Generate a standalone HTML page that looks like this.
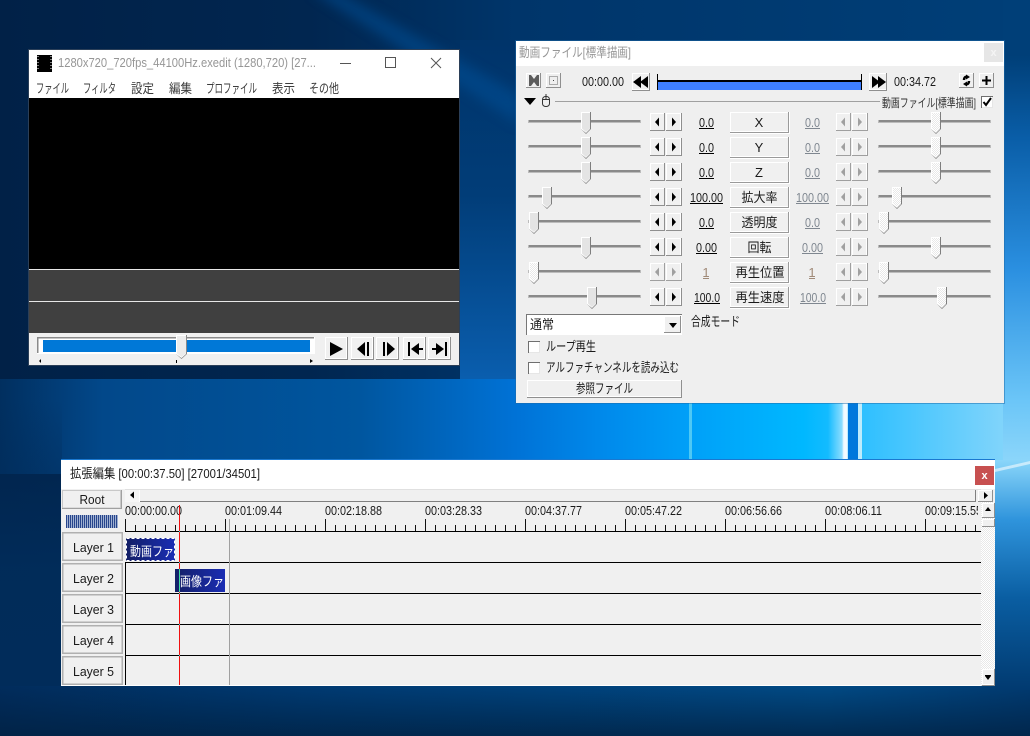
<!DOCTYPE html>
<html lang="ja"><head><meta charset="utf-8"><title>AviUtl</title>
<style>
html,body{margin:0;padding:0;background:#012a58;width:1030px;height:736px;overflow:hidden}
svg{display:block}
text{font-family:"Liberation Sans","Noto Sans CJK JP",sans-serif;font-size:13px;fill:#1a1a1a}
.g{fill:#7f8790}.t{fill:#969696}.m{fill:#3c3c3c}
.mid{text-anchor:middle}
</style></head><body>
<svg xmlns="http://www.w3.org/2000/svg" width="1030" height="736" viewBox="0 0 1030 736">
<defs>
<linearGradient id="top" x1="0" x2="1" y1="0" y2="0"><stop offset="0" stop-color="#012147"/><stop offset=".3" stop-color="#012650"/><stop offset=".5" stop-color="#00356a"/><stop offset="1" stop-color="#003f78"/></linearGradient>
<linearGradient id="band" x1="0" x2="1" y1="0" y2="0"><stop offset="0" stop-color="#012f5f"/><stop offset=".1" stop-color="#02488a"/><stop offset=".35" stop-color="#00569f"/><stop offset=".5" stop-color="#0072d6"/><stop offset=".58" stop-color="#0088ea"/><stop offset=".67" stop-color="#00a0f8"/><stop offset=".78" stop-color="#00b8ff"/><stop offset=".84" stop-color="#30c0ff"/><stop offset="1" stop-color="#90d8fa"/></linearGradient>
<linearGradient id="bot" x1="0" x2="1" y1="0" y2="0"><stop offset="0" stop-color="#012c5c"/><stop offset=".3" stop-color="#003a72"/><stop offset=".8" stop-color="#014a85"/><stop offset="1" stop-color="#013a70"/></linearGradient>
<linearGradient id="botv" x1="0" x2="0" y1="0" y2="1"><stop offset="0" stop-color="#012040" stop-opacity="0"/><stop offset="1" stop-color="#012040" stop-opacity=".75"/></linearGradient>
<linearGradient id="lft" x1="0" x2="0" y1="0" y2="1"><stop offset="0" stop-color="#012c5a" stop-opacity="0"/><stop offset=".5" stop-color="#012c5a" stop-opacity=".95"/><stop offset="1" stop-color="#012c5a"/></linearGradient>
<linearGradient id="rt" x1="0" x2="0" y1="0" y2="1"><stop offset="0" stop-color="#003f78"/><stop offset=".12" stop-color="#003f78"/><stop offset=".3" stop-color="#0a5ea8"/><stop offset=".58" stop-color="#2a8fe0"/><stop offset=".87" stop-color="#6cc6f8"/><stop offset="1" stop-color="#8cd6fa"/></linearGradient>
<linearGradient id="rb" x1="0" x2="0" y1="0" y2="1"><stop offset="0" stop-color="#8ad6fa"/><stop offset=".26" stop-color="#2f94dc"/><stop offset=".6" stop-color="#0a5ea2"/><stop offset="1" stop-color="#013a70"/></linearGradient>
<linearGradient id="gap" x1="0" x2="0" y1="0" y2="1"><stop offset="0" stop-color="#00346a"/><stop offset=".45" stop-color="#013d78"/><stop offset="1" stop-color="#0a5fb0"/></linearGradient>
<linearGradient id="glow" x1="0" x2="1" y1="0" y2="0"><stop offset="0" stop-color="#fff" stop-opacity="0"/><stop offset="1" stop-color="#fff" stop-opacity=".55"/></linearGradient>
<linearGradient id="clip1" x1="0" x2="1" y1="0" y2="0"><stop offset="0" stop-color="#141f66"/><stop offset="1" stop-color="#1a2db4"/></linearGradient>
<filter id="b8" x="-30%" y="-30%" width="160%" height="160%"><feGaussianBlur stdDeviation="6"/></filter>
<filter id="b1" x="-50%" y="-10%" width="200%" height="120%"><feGaussianBlur stdDeviation="0.8"/></filter>
<pattern id="dith" width="2" height="2" patternUnits="userSpaceOnUse"><rect width="2" height="2" fill="#fff"/><rect width="1" height="1" fill="#e8e8e8"/><rect x="1" y="1" width="1" height="1" fill="#e8e8e8"/></pattern>
<pattern id="tickm" x="125" width="10" height="6" patternUnits="userSpaceOnUse"><rect x="0" width="1" height="6" fill="#111"/></pattern>
<pattern id="tickM" x="125" width="100" height="12" patternUnits="userSpaceOnUse"><rect x="0" width="1" height="12" fill="#111"/></pattern>
<pattern id="wave" x="66" width="2" height="10" patternUnits="userSpaceOnUse"><rect width="1" height="10" fill="#27458c"/><rect x="1" width="1" height="10" fill="#9fb0d0"/></pattern>
<clipPath id="rul"><rect x="125" y="500" width="853" height="20"/></clipPath>
<clipPath id="c1"><rect x="126" y="538" width="49" height="23"/></clipPath>
<clipPath id="c2"><rect x="175" y="569" width="50" height="23"/></clipPath>

<g id="spin">
 <rect width="15" height="18" fill="#8f8f8f"/><rect width="14" height="17" fill="#fff"/><rect x="1" y="1" width="13" height="16" fill="#f0f0f0"/>
 <rect x="16" width="16" height="18" fill="#8f8f8f"/><rect x="16" width="15" height="17" fill="#fff"/><rect x="17" y="1" width="13" height="16" fill="#f0f0f0"/>
 <polygon points="5,9 9,4.500 9,13.500" fill="#000"/><polygon points="22,4.500 26,9 22,13.500" fill="#000"/>
</g>
<g id="spinD">
 <rect width="15" height="18" fill="#9f9f9f"/><rect width="14" height="17" fill="#fff"/><rect x="1" y="1" width="13" height="16" fill="#f0f0f0"/>
 <rect x="16" width="16" height="18" fill="#9f9f9f"/><rect x="16" width="15" height="17" fill="#fff"/><rect x="17" y="1" width="13" height="16" fill="#f0f0f0"/>
 <polygon points="5,9 9,4.500 9,13.500" fill="#a0a0a0"/><polygon points="22,4.500 26,9 22,13.500" fill="#a0a0a0"/>
</g>
<g id="thumb">
 <polygon points="0,0 10,0 10,17 5,22 0,17" fill="#7e7e7e"/>
 <polygon points="0,0 9,0 9,17 5,21 0,17" fill="#fff"/>
 <polygon points="1,1 9,1 9,16.500 5,20 1,16.500" fill="#e4e4e4"/>
</g>
<g id="thumbD">
 <polygon points="0,0 10,0 10,17 5,22 0,17" fill="#7e7e7e"/>
 <polygon points="0,0 9,0 9,17 5,21 0,17" fill="#fff"/>
 <polygon points="1,1 9,1 9,16.500 5,20 1,16.500" fill="url(#dith)"/>
</g>
<g id="track">
 <rect width="113" height="3" fill="#bcbcbc"/><rect x="1" y="0" width="111" height="2" fill="#8a8a8a"/>
</g>
<g id="nbtn">
 <rect width="59" height="21" fill="#9a9a9a"/><rect width="58" height="20" fill="#fff"/><rect x="1" y="1" width="57" height="18" fill="#f0f0f0"/>
 <rect x="59" y="0" width="1" height="22" fill="#fff"/><rect y="21" width="60" height="1" fill="#fff"/>
</g>
<g id="pbtn">
 <rect width="23" height="23" fill="#8f8f8f"/><rect width="22" height="22" fill="#fff"/><rect x="1" y="1" width="20" height="20" fill="#f0f0f0"/>
</g>
<g id="layer">
 <rect width="61" height="29" fill="#b0b0b0"/><rect x="1.500" y="1.500" width="58" height="26" fill="#f0f0f0"/>
</g>
<g id="cb"><rect width="12" height="12" fill="#6f6f6f"/><rect x="1" y="1" width="11" height="11" fill="#e6e6e6"/><rect x="1" y="1" width="10" height="10" fill="#fff"/></g>
</defs>

<!-- wallpaper -->
<rect width="1030" height="736" fill="url(#top)"/>
<rect x="460" y="40" width="60" height="345" fill="url(#gap)"/>
<polygon points="310,-10 335,-10 520,95 520,125" fill="#005096" opacity=".55" filter="url(#b8)"/>
<rect x="0" y="379" width="1030" height="95" fill="url(#band)"/>
<rect x="1003" y="0" width="27" height="462" fill="url(#rt)"/>
<rect x="0" y="400" width="62" height="336" fill="url(#lft)"/>
<rect x="0" y="686" width="1030" height="50" fill="url(#bot)"/>
<rect x="0" y="686" width="1030" height="50" fill="url(#botv)"/>
<rect x="995" y="460" width="35" height="230" fill="url(#rb)"/>
<polygon points="995,469 1030,461 1030,464 995,472" fill="#fff" opacity=".55"/>
<rect x="689" y="400" width="3" height="62" fill="#62d2f2" opacity=".8"/>
<rect x="828" y="400" width="16" height="62" fill="url(#glow)"/>
<rect x="843" y="400" width="5" height="62" fill="#fff" opacity=".95" filter="url(#b1)"/>
<rect x="848" y="400" width="10" height="62" fill="#0078dc"/>
<rect x="858" y="400" width="4" height="62" fill="#d8f2fc" opacity=".85"/>

<!-- main window -->
<rect x="28" y="49" width="432" height="317" fill="#2b3f58"/>
<rect x="29" y="50" width="430" height="49" fill="#fff"/>
<rect x="37" y="55" width="15" height="17" fill="#000"/>
<path d="M38 56v15M51 56v15" stroke="#fff" stroke-width="1" stroke-dasharray="1 2"/>
<text x="58" y="67" class="t" textLength="258" lengthAdjust="spacingAndGlyphs">1280x720_720fps_44100Hz.exedit (1280,720)  [27...</text>
<rect x="340" y="63" width="11" height="1" fill="#555"/>
<rect x="385.500" y="57.500" width="10" height="10" fill="none" stroke="#555"/>
<path d="M431 58l10 10M441 58l-10 10" stroke="#555" fill="none"/>
<text x="36" y="93" class="m" textLength="33" lengthAdjust="spacingAndGlyphs">ファイル</text>
<text x="83" y="93" class="m" textLength="33" lengthAdjust="spacingAndGlyphs">フィルタ</text>
<text x="131" y="93" class="m" textLength="23" lengthAdjust="spacingAndGlyphs">設定</text>
<text x="169" y="93" class="m" textLength="23" lengthAdjust="spacingAndGlyphs">編集</text>
<text x="206" y="93" class="m" textLength="51" lengthAdjust="spacingAndGlyphs">プロファイル</text>
<text x="272" y="93" class="m" textLength="23" lengthAdjust="spacingAndGlyphs">表示</text>
<text x="309" y="93" class="m" textLength="30" lengthAdjust="spacingAndGlyphs">その他</text>
<rect x="29" y="98" width="430" height="171" fill="#000"/>
<rect x="29" y="269" width="430" height="1" fill="#e8e8e8"/>
<rect x="29" y="270" width="430" height="31" fill="#404040"/>
<rect x="29" y="301" width="430" height="1" fill="#e8e8e8"/>
<rect x="29" y="302" width="430" height="31" fill="#404040"/>
<rect x="29" y="333" width="430" height="32" fill="#f0f0f0"/>
<rect x="37" y="337" width="278" height="17" fill="#fff"/>
<rect x="37" y="337" width="277" height="1.500" fill="#8a8a8a"/>
<rect x="37" y="337" width="1.500" height="16" fill="#8a8a8a"/>
<rect x="43" y="340" width="267" height="12" fill="#0078d7"/>
<g transform="translate(176 335)"><polygon points="0,0 11,0 11,19 5.500,24 0,19" fill="#8a8a8a"/><polygon points="0,0 10,0 10,19 5.500,23 0,19" fill="#fff"/><polygon points="1,1 10,1 10,18.500 5.500,22 1,18.500" fill="#ececec"/></g>
<polygon points="41,359 41,363 39,361" fill="#000"/><rect x="176" y="360" width="1" height="3" fill="#000"/><polygon points="310,359 310,363 313,361" fill="#000"/>
<use href="#pbtn" x="325" y="337"/><polygon points="330,342 343,349 330,356" fill="#000"/>
<use href="#pbtn" x="351" y="337"/><polygon points="365,342 357,349 365,356" fill="#000"/><rect x="367" y="342" width="2" height="14" fill="#000"/>
<use href="#pbtn" x="376" y="337"/><rect x="383" y="342" width="2" height="14" fill="#000"/><polygon points="387,342 395,349 387,356" fill="#000"/>
<use href="#pbtn" x="403" y="337"/><rect x="408" y="342" width="2" height="14" fill="#000"/><polygon points="411,349 419,343 419,355" fill="#000"/><rect x="418" y="348" width="5" height="2" fill="#000"/>
<use href="#pbtn" x="428" y="337"/><rect x="445" y="342" width="2" height="14" fill="#000"/><polygon points="444,349 436,343 436,355" fill="#000"/><rect x="432" y="348" width="5" height="2" fill="#000"/>

<!-- object window -->
<rect x="515" y="40" width="490" height="364" fill="#1e6aa8" opacity=".5"/>
<rect x="516" y="41" width="488" height="362" fill="#efefef"/>
<rect x="516" y="41" width="488" height="25" fill="#fff"/>
<rect x="984" y="43" width="19" height="19" fill="#e6e6e6"/>
<text x="993.500" y="56" class="mid" style="fill:#f4f4f4;font-size:11px;font-weight:bold">x</text>
<text x="519" y="57" class="t" textLength="112" lengthAdjust="spacingAndGlyphs">動画ファイル[標準描画]</text>

<rect x="526" y="73" width="15" height="15" fill="#8f8f8f"/><rect x="526" y="73" width="14" height="14" fill="#fff"/><rect x="527" y="74" width="13" height="13" fill="#efefef"/>
<path d="M529 75h10v11h-10z" fill="#5c5c5c"/><path d="M531 75h6l-3 4zM531 86h6l-3-4z" fill="#efefef"/>
<rect x="546" y="73" width="15" height="15" fill="#8f8f8f"/><rect x="546" y="73" width="14" height="14" fill="#fff"/><rect x="547" y="74" width="13" height="13" fill="#efefef"/>
<rect x="549.500" y="76.500" width="8" height="8" fill="none" stroke="#666" stroke-dasharray="1 1"/><rect x="553" y="80" width="1" height="1" fill="#444"/>
<text x="582" y="86" textLength="42" lengthAdjust="spacingAndGlyphs">00:00.00</text>
<rect x="632" y="73" width="18" height="18" fill="#8f8f8f"/><rect x="632" y="73" width="17" height="17" fill="#fff"/><rect x="633" y="74" width="16" height="15" fill="#f0f0f0"/>
<polygon points="633,82 641,76 641,88" fill="#000"/><polygon points="640,82 648,76 648,88" fill="#000"/>
<rect x="657" y="74" width="1" height="16" fill="#000"/><rect x="861" y="74" width="1" height="16" fill="#000"/>
<rect x="657" y="80" width="205" height="2" fill="#000"/><rect x="658" y="82" width="203" height="8" fill="#3f7fff"/>
<rect x="869" y="73" width="18" height="18" fill="#8f8f8f"/><rect x="869" y="73" width="17" height="17" fill="#fff"/><rect x="870" y="74" width="16" height="15" fill="#f0f0f0"/>
<polygon points="872,76 880,82 872,88" fill="#000"/><polygon points="878,76 886,82 878,88" fill="#000"/>
<text x="894" y="86" textLength="42" lengthAdjust="spacingAndGlyphs">00:34.72</text>
<rect x="959" y="73" width="15" height="15" fill="#8f8f8f"/><rect x="959" y="73" width="14" height="14" fill="#fff"/><rect x="960" y="74" width="13" height="13" fill="#f0f0f0"/>
<path d="M968 77c-3-1-4 1-4 3M965 84c3 1 4-1 4-3" stroke="#000" stroke-width="2.500" fill="none"/><polygon points="966,74.500 970,77 966,79.500" fill="#000"/><polygon points="967,81.500 963,84 967,86.500" fill="#000"/>
<rect x="979" y="73" width="15" height="15" fill="#8f8f8f"/><rect x="979" y="73" width="14" height="14" fill="#fff"/><rect x="980" y="74" width="13" height="13" fill="#f0f0f0"/>
<path d="M986.500 76v9M982 80.500h9" stroke="#000" stroke-width="2" fill="none"/>

<polygon points="524,98 536,98 530,105" fill="#000"/>
<rect x="542.500" y="96.500" width="7" height="10" rx="3" fill="none" stroke="#333"/><path d="M546 94v5M543 99.500h6" stroke="#333" fill="none"/>
<rect x="555" y="101" width="325" height="1" fill="#a0a0a0"/>
<text x="882" y="107" style="font-size:12px;fill:#333" textLength="94" lengthAdjust="spacingAndGlyphs">動画ファイル[標準描画]</text>
<use href="#cb" x="981" y="96"/><path d="M983.500 102l2.500 3 5-7" stroke="#000" stroke-width="2" fill="none"/>

<!-- rows -->
<use href="#track" x="528" y="120"/><use href="#track" x="528" y="145"/><use href="#track" x="528" y="170"/><use href="#track" x="528" y="195"/><use href="#track" x="528" y="220"/><use href="#track" x="528" y="245"/><use href="#track" x="528" y="270"/><use href="#track" x="528" y="295"/>
<use href="#track" x="878" y="120"/><use href="#track" x="878" y="145"/><use href="#track" x="878" y="170"/><use href="#track" x="878" y="195"/><use href="#track" x="878" y="220"/><use href="#track" x="878" y="245"/><use href="#track" x="878" y="270"/><use href="#track" x="878" y="295"/>

<use href="#thumb" x="581" y="112"/><use href="#thumb" x="581" y="137"/><use href="#thumb" x="581" y="162"/><use href="#thumb" x="542" y="187"/><use href="#thumb" x="529" y="212"/><use href="#thumb" x="581" y="237"/><use href="#thumbD" x="529" y="262"/><use href="#thumb" x="587" y="287"/>
<use href="#thumbD" x="931" y="112"/><use href="#thumbD" x="931" y="137"/><use href="#thumbD" x="931" y="162"/><use href="#thumbD" x="892" y="187"/><use href="#thumbD" x="879" y="212"/><use href="#thumbD" x="931" y="237"/><use href="#thumbD" x="879" y="262"/><use href="#thumbD" x="937" y="287"/>

<use href="#spin" x="650" y="113"/><use href="#spin" x="650" y="138"/><use href="#spin" x="650" y="163"/><use href="#spin" x="650" y="188"/><use href="#spin" x="650" y="213"/><use href="#spin" x="650" y="238"/><use href="#spinD" x="650" y="263"/><use href="#spin" x="650" y="288"/>
<use href="#spinD" x="836" y="113"/><use href="#spinD" x="836" y="138"/><use href="#spinD" x="836" y="163"/><use href="#spinD" x="836" y="188"/><use href="#spinD" x="836" y="213"/><use href="#spinD" x="836" y="238"/><use href="#spinD" x="836" y="263"/><use href="#spinD" x="836" y="288"/>

<use href="#nbtn" x="730" y="112"/><use href="#nbtn" x="730" y="137"/><use href="#nbtn" x="730" y="162"/><use href="#nbtn" x="730" y="187"/><use href="#nbtn" x="730" y="212"/><use href="#nbtn" x="730" y="237"/><use href="#nbtn" x="730" y="262"/><use href="#nbtn" x="730" y="287"/>
<text x="759" y="127" class="mid">X</text>
<text x="759" y="152" class="mid">Y</text>
<text x="759" y="177" class="mid">Z</text>
<text x="759.500" y="202" class="mid" textLength="36" lengthAdjust="spacingAndGlyphs">拡大率</text>
<text x="759.500" y="227" class="mid" textLength="36" lengthAdjust="spacingAndGlyphs">透明度</text>
<text x="759.500" y="252" class="mid" textLength="24" lengthAdjust="spacingAndGlyphs">回転</text>
<text x="760" y="277" class="mid" textLength="49" lengthAdjust="spacingAndGlyphs">再生位置</text>
<text x="760" y="302" class="mid" textLength="49" lengthAdjust="spacingAndGlyphs">再生速度</text>

<text x="706.500" y="127" class="mid" textLength="15" lengthAdjust="spacingAndGlyphs">0.0</text><rect x="699" y="128" width="15" height="1" fill="#000"/>
<text x="706.500" y="152" class="mid" textLength="15" lengthAdjust="spacingAndGlyphs">0.0</text><rect x="699" y="153" width="15" height="1" fill="#000"/>
<text x="706.500" y="177" class="mid" textLength="15" lengthAdjust="spacingAndGlyphs">0.0</text><rect x="699" y="178" width="15" height="1" fill="#000"/>
<text x="706.500" y="202" class="mid" textLength="33" lengthAdjust="spacingAndGlyphs">100.00</text><rect x="690" y="203" width="33" height="1" fill="#000"/>
<text x="706.500" y="227" class="mid" textLength="15" lengthAdjust="spacingAndGlyphs">0.0</text><rect x="699" y="228" width="15" height="1" fill="#000"/>
<text x="706.500" y="252" class="mid" textLength="21" lengthAdjust="spacingAndGlyphs">0.00</text><rect x="696" y="253" width="21" height="1" fill="#000"/>
<text x="706" y="277" class="mid" style="fill:#a08a78">1</text><rect x="703" y="278" width="6" height="1" fill="#a08a78"/>
<text x="707" y="302" class="mid" textLength="26" lengthAdjust="spacingAndGlyphs">100.0</text><rect x="694" y="303" width="26" height="1" fill="#000"/>

<text x="812.500" y="127" class="mid g" textLength="15" lengthAdjust="spacingAndGlyphs">0.0</text><rect x="805" y="128" width="15" height="1" fill="#7f8790"/>
<text x="812.500" y="152" class="mid g" textLength="15" lengthAdjust="spacingAndGlyphs">0.0</text><rect x="805" y="153" width="15" height="1" fill="#7f8790"/>
<text x="812.500" y="177" class="mid g" textLength="15" lengthAdjust="spacingAndGlyphs">0.0</text><rect x="805" y="178" width="15" height="1" fill="#7f8790"/>
<text x="812.500" y="202" class="mid g" textLength="33" lengthAdjust="spacingAndGlyphs">100.00</text><rect x="796" y="203" width="33" height="1" fill="#7f8790"/>
<text x="812.500" y="227" class="mid g" textLength="15" lengthAdjust="spacingAndGlyphs">0.0</text><rect x="805" y="228" width="15" height="1" fill="#7f8790"/>
<text x="812.500" y="252" class="mid g" textLength="21" lengthAdjust="spacingAndGlyphs">0.00</text><rect x="802" y="253" width="21" height="1" fill="#7f8790"/>
<text x="812" y="277" class="mid" style="fill:#a08a78">1</text><rect x="809" y="278" width="6" height="1" fill="#a08a78"/>
<text x="813" y="302" class="mid g" textLength="26" lengthAdjust="spacingAndGlyphs">100.0</text><rect x="800" y="303" width="26" height="1" fill="#7f8790"/>

<!-- combo and checks -->
<rect x="526" y="314" width="156" height="21" fill="#fff"/>
<rect x="526" y="314" width="156" height="1" fill="#777"/><rect x="526" y="314" width="1" height="21" fill="#777"/>
<rect x="664" y="316" width="17" height="17" fill="#8f8f8f"/><rect x="664" y="316" width="16" height="16" fill="#fff"/><rect x="665" y="317" width="15" height="15" fill="#f0f0f0"/>
<polygon points="669,323 677,323 673,328" fill="#000"/>
<text x="530" y="329" textLength="24" lengthAdjust="spacingAndGlyphs">通常</text>
<text x="691" y="326" textLength="49" lengthAdjust="spacingAndGlyphs">合成モード</text>
<use href="#cb" x="528" y="341"/>
<text x="546" y="351" textLength="50" lengthAdjust="spacingAndGlyphs">ループ再生</text>
<use href="#cb" x="528" y="362"/>
<text x="546" y="372" textLength="133" lengthAdjust="spacingAndGlyphs">アルファチャンネルを読み込む</text>
<rect x="527" y="380" width="155" height="18" fill="#8f8f8f"/><rect x="527" y="380" width="154" height="17" fill="#fff"/><rect x="528" y="381" width="153" height="15" fill="#f0f0f0"/>
<text x="604.500" y="393" class="mid" textLength="57" lengthAdjust="spacingAndGlyphs">参照ファイル</text>

<!-- timeline window -->
<rect x="61" y="459" width="934" height="1" fill="#1a78d0"/>
<rect x="61" y="460" width="934" height="30" fill="#fff"/>
<rect x="61" y="489" width="934" height="197" fill="#f0f0f0"/>
<rect x="61" y="685" width="921" height="1" fill="#fff"/>
<text x="70" y="478" textLength="190" lengthAdjust="spacingAndGlyphs">拡張編集 [00:00:37.50] [27001/34501]</text>
<rect x="975" y="466" width="19" height="19" fill="#c75050"/>
<text x="984.500" y="479" class="mid" style="fill:#fff;font-size:11px;font-weight:bold">x</text>

<rect x="62" y="490" width="60" height="19" fill="#a0a0a0"/><rect x="62" y="490" width="59" height="18" fill="#c8c8c8"/><rect x="63" y="491" width="57" height="16.500" fill="#f0f0f0"/>
<text x="92" y="504" class="mid" textLength="25" lengthAdjust="spacingAndGlyphs">Root</text>
<rect x="66" y="515" width="52" height="13" fill="url(#wave)"/>

<rect x="125" y="489" width="856" height="1" fill="#e0e0e0"/>
<rect x="125" y="490" width="15" height="12" fill="#f6f6f6"/><polygon points="130,495 134,491.500 134,498.500" fill="#000"/>
<rect x="139" y="490" width="1" height="12" fill="#fff"/>
<rect x="140" y="490" width="836" height="11" fill="#f0f0f0"/>
<rect x="140" y="501" width="836" height="1" fill="#808080"/><rect x="975" y="490" width="1" height="12" fill="#808080"/>
<rect x="978" y="490" width="15" height="12" fill="#8f8f8f"/><rect x="978" y="490" width="14" height="11" fill="#fff"/><rect x="979" y="491" width="13" height="10" fill="#f0f0f0"/>
<polygon points="984,492 984,499 988,495.500" fill="#000"/>

<g clip-path="url(#rul)">
<text x="125" y="515" textLength="57" lengthAdjust="spacingAndGlyphs">00:00:00.00</text>
<text x="225" y="515" textLength="57" lengthAdjust="spacingAndGlyphs">00:01:09.44</text>
<text x="325" y="515" textLength="57" lengthAdjust="spacingAndGlyphs">00:02:18.88</text>
<text x="425" y="515" textLength="57" lengthAdjust="spacingAndGlyphs">00:03:28.33</text>
<text x="525" y="515" textLength="57" lengthAdjust="spacingAndGlyphs">00:04:37.77</text>
<text x="625" y="515" textLength="57" lengthAdjust="spacingAndGlyphs">00:05:47.22</text>
<text x="725" y="515" textLength="57" lengthAdjust="spacingAndGlyphs">00:06:56.66</text>
<text x="825" y="515" textLength="57" lengthAdjust="spacingAndGlyphs">00:08:06.11</text>
<text x="925" y="515" textLength="57" lengthAdjust="spacingAndGlyphs">00:09:15.55</text>
</g>
<rect x="125" y="525" width="856" height="6" fill="url(#tickm)"/>
<rect x="125" y="519" width="856" height="12" fill="url(#tickM)"/>
<rect x="125" y="531" width="856" height="1" fill="#000"/>

<use href="#layer" x="62" y="532"/><use href="#layer" x="62" y="563"/><use href="#layer" x="62" y="594"/><use href="#layer" x="62" y="625"/><use href="#layer" x="62" y="656"/>
<text x="93.500" y="552" class="mid" textLength="41" lengthAdjust="spacingAndGlyphs">Layer  1</text>
<text x="93.500" y="583" class="mid" textLength="41" lengthAdjust="spacingAndGlyphs">Layer  2</text>
<text x="93.500" y="614" class="mid" textLength="41" lengthAdjust="spacingAndGlyphs">Layer  3</text>
<text x="93.500" y="645" class="mid" textLength="41" lengthAdjust="spacingAndGlyphs">Layer  4</text>
<text x="93.500" y="676" class="mid" textLength="41" lengthAdjust="spacingAndGlyphs">Layer  5</text>

<rect x="125" y="562" width="1" height="123" fill="#000"/>
<rect x="125" y="562" width="856" height="1" fill="#000"/>
<rect x="125" y="593" width="856" height="1" fill="#000"/>
<rect x="125" y="624" width="856" height="1" fill="#000"/>
<rect x="125" y="655" width="856" height="1" fill="#000"/>
<rect x="229" y="519" width="1" height="166" fill="#a0a0a0"/>

<rect x="126" y="538" width="49" height="23" fill="url(#clip1)"/>
<rect x="126.500" y="538.500" width="48" height="22" fill="none" stroke="#fff" stroke-dasharray="3 2"/>
<g clip-path="url(#c1)"><text x="130" y="556" style="fill:#fff" textLength="66" lengthAdjust="spacingAndGlyphs">動画ファイル</text></g>
<rect x="175" y="569" width="50" height="23" fill="url(#clip1)"/>
<g clip-path="url(#c2)"><text x="180" y="586" style="fill:#fff" textLength="66" lengthAdjust="spacingAndGlyphs">画像ファイル</text></g>

<rect x="179" y="505" width="1" height="180" fill="#f01010"/>
<rect x="179" y="569" width="1" height="23" fill="#3fe0a0"/>
<rect x="179" y="531" width="1" height="1" fill="#40e0e0"/><rect x="179" y="562" width="1" height="1" fill="#40e0e0"/><rect x="179" y="593" width="1" height="1" fill="#40e0e0"/><rect x="179" y="624" width="1" height="1" fill="#40e0e0"/><rect x="179" y="655" width="1" height="1" fill="#40e0e0"/>

<rect x="981" y="502" width="14" height="184" fill="url(#dith)"/>
<rect x="982" y="503" width="13" height="15" fill="#8f8f8f"/><rect x="982" y="503" width="12" height="14" fill="#fff"/><rect x="983" y="504" width="11" height="13" fill="#f0f0f0"/>
<polygon points="985,511 991,511 988,507" fill="#000"/>
<rect x="982" y="519" width="13" height="8" fill="#8f8f8f"/><rect x="982" y="519" width="12" height="7" fill="#fff"/><rect x="983" y="520" width="11" height="6" fill="#f0f0f0"/>
<rect x="982" y="669" width="13" height="17" fill="#8f8f8f"/><rect x="982" y="669" width="12" height="16" fill="#fff"/><rect x="983" y="670" width="11" height="14" fill="#f0f0f0"/>
<polygon points="985,676 991,676 988,680" fill="#000"/><rect x="985" y="675" width="6" height="1" fill="#000"/>
</svg>
</body></html>
